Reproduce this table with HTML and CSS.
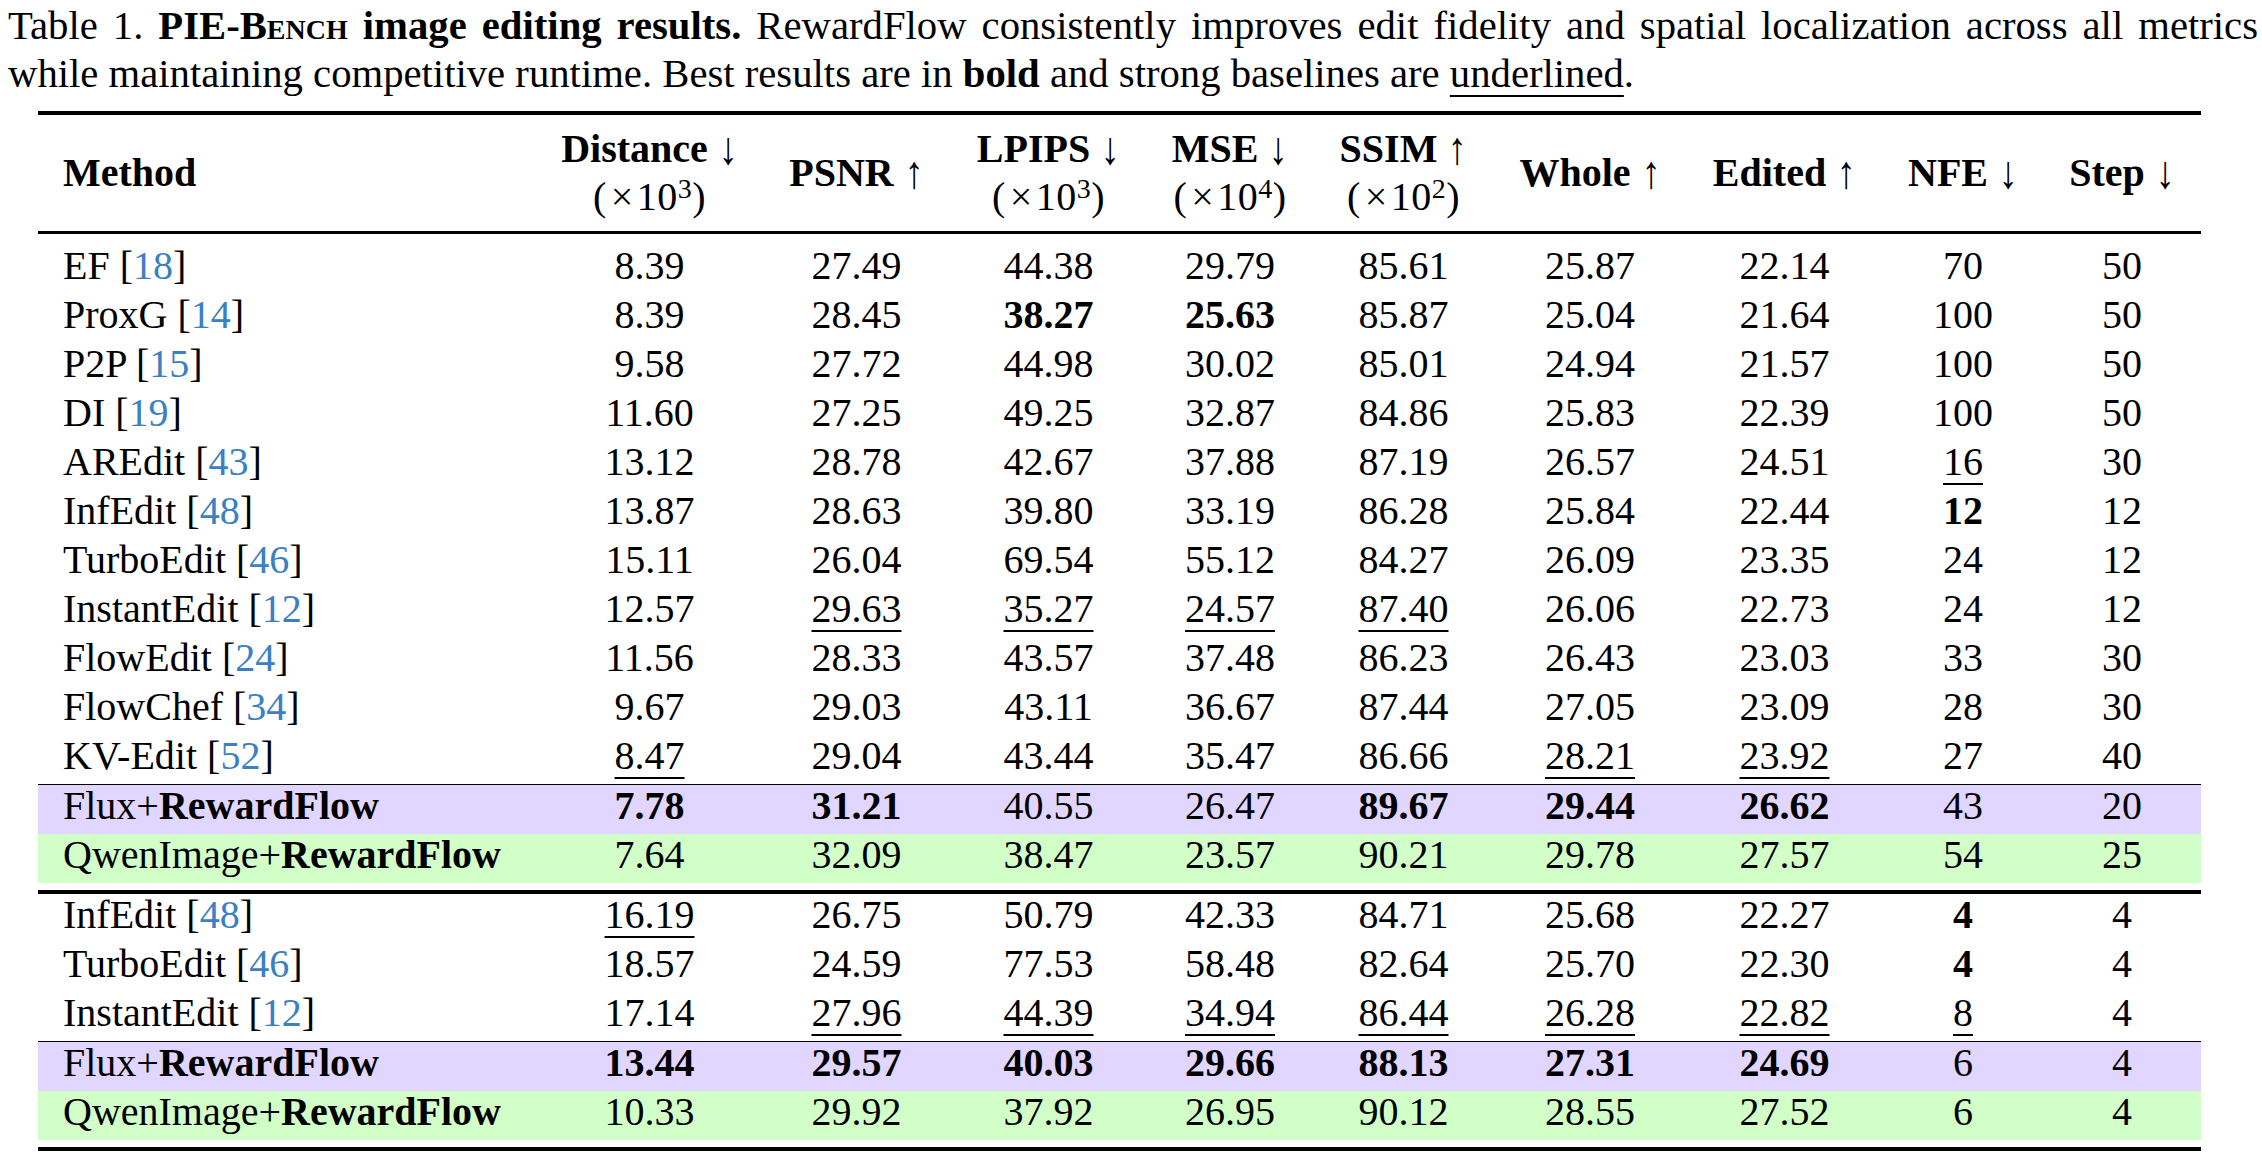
FILE: index.html
```html
<!DOCTYPE html>
<html lang="en">
<head>
<meta charset="utf-8">
<title>Table 1. PIE-Bench image editing results</title>
<link rel="stylesheet" href="styles.css">
</head>
<body>
<div class="page">
  <p class="caption"><span class="line1">Table 1. <b>PIE-<span class="sc">Bench</span> image editing results.</b> RewardFlow consistently improves edit fidelity and spatial localization across all metrics</span>while maintaining competitive runtime. Best results are in <b>bold</b> and strong baselines are <span class="u">underlined</span>.</p>

  <div class="table">
    <div class="rule heavy"></div>
    <div class="row head">
      <div class="cell name"><b>Method</b></div>
      <div class="cell"><b>Distance</b> <span class="ar">↓</span><br><span class="scale">(<span class="times">×</span>10<sup>3</sup>)</span></div>
      <div class="cell"><b>PSNR</b> <span class="ar">↑</span></div>
      <div class="cell"><b>LPIPS</b> <span class="ar">↓</span><br><span class="scale">(<span class="times">×</span>10<sup>3</sup>)</span></div>
      <div class="cell"><b>MSE</b> <span class="ar">↓</span><br><span class="scale">(<span class="times">×</span>10<sup>4</sup>)</span></div>
      <div class="cell"><b>SSIM</b> <span class="ar">↑</span><br><span class="scale">(<span class="times">×</span>10<sup>2</sup>)</span></div>
      <div class="cell"><b>Whole</b> <span class="ar">↑</span></div>
      <div class="cell"><b>Edited</b> <span class="ar">↑</span></div>
      <div class="cell"><b>NFE</b> <span class="ar">↓</span></div>
      <div class="cell"><b>Step</b> <span class="ar">↓</span></div>
    </div>
    <div class="rule head-rule"></div>

    <div class="group first">
      <div class="row"><div class="cell name">EF [<span class="ref">18</span>]</div><div class="cell">8.39</div><div class="cell">27.49</div><div class="cell">44.38</div><div class="cell">29.79</div><div class="cell">85.61</div><div class="cell">25.87</div><div class="cell">22.14</div><div class="cell">70</div><div class="cell">50</div></div>
      <div class="row"><div class="cell name">ProxG [<span class="ref">14</span>]</div><div class="cell">8.39</div><div class="cell">28.45</div><div class="cell"><b>38.27</b></div><div class="cell"><b>25.63</b></div><div class="cell">85.87</div><div class="cell">25.04</div><div class="cell">21.64</div><div class="cell">100</div><div class="cell">50</div></div>
      <div class="row"><div class="cell name">P2P [<span class="ref">15</span>]</div><div class="cell">9.58</div><div class="cell">27.72</div><div class="cell">44.98</div><div class="cell">30.02</div><div class="cell">85.01</div><div class="cell">24.94</div><div class="cell">21.57</div><div class="cell">100</div><div class="cell">50</div></div>
      <div class="row"><div class="cell name">DI [<span class="ref">19</span>]</div><div class="cell">11.60</div><div class="cell">27.25</div><div class="cell">49.25</div><div class="cell">32.87</div><div class="cell">84.86</div><div class="cell">25.83</div><div class="cell">22.39</div><div class="cell">100</div><div class="cell">50</div></div>
      <div class="row"><div class="cell name">AREdit [<span class="ref">43</span>]</div><div class="cell">13.12</div><div class="cell">28.78</div><div class="cell">42.67</div><div class="cell">37.88</div><div class="cell">87.19</div><div class="cell">26.57</div><div class="cell">24.51</div><div class="cell"><span class="u">16</span></div><div class="cell">30</div></div>
      <div class="row"><div class="cell name">InfEdit [<span class="ref">48</span>]</div><div class="cell">13.87</div><div class="cell">28.63</div><div class="cell">39.80</div><div class="cell">33.19</div><div class="cell">86.28</div><div class="cell">25.84</div><div class="cell">22.44</div><div class="cell"><b>12</b></div><div class="cell">12</div></div>
      <div class="row"><div class="cell name">TurboEdit [<span class="ref">46</span>]</div><div class="cell">15.11</div><div class="cell">26.04</div><div class="cell">69.54</div><div class="cell">55.12</div><div class="cell">84.27</div><div class="cell">26.09</div><div class="cell">23.35</div><div class="cell">24</div><div class="cell">12</div></div>
      <div class="row"><div class="cell name">InstantEdit [<span class="ref">12</span>]</div><div class="cell">12.57</div><div class="cell"><span class="u">29.63</span></div><div class="cell"><span class="u">35.27</span></div><div class="cell"><span class="u">24.57</span></div><div class="cell"><span class="u">87.40</span></div><div class="cell">26.06</div><div class="cell">22.73</div><div class="cell">24</div><div class="cell">12</div></div>
      <div class="row"><div class="cell name">FlowEdit [<span class="ref">24</span>]</div><div class="cell">11.56</div><div class="cell">28.33</div><div class="cell">43.57</div><div class="cell">37.48</div><div class="cell">86.23</div><div class="cell">26.43</div><div class="cell">23.03</div><div class="cell">33</div><div class="cell">30</div></div>
      <div class="row"><div class="cell name">FlowChef [<span class="ref">34</span>]</div><div class="cell">9.67</div><div class="cell">29.03</div><div class="cell">43.11</div><div class="cell">36.67</div><div class="cell">87.44</div><div class="cell">27.05</div><div class="cell">23.09</div><div class="cell">28</div><div class="cell">30</div></div>
      <div class="row"><div class="cell name">KV-Edit [<span class="ref">52</span>]</div><div class="cell"><span class="u">8.47</span></div><div class="cell">29.04</div><div class="cell">43.44</div><div class="cell">35.47</div><div class="cell">86.66</div><div class="cell"><span class="u">28.21</span></div><div class="cell"><span class="u">23.92</span></div><div class="cell">27</div><div class="cell">40</div></div>
    </div>
    <div class="rule thin"></div>
    <div class="row flux"><div class="cell name">Flux+<b>RewardFlow</b></div><div class="cell"><b>7.78</b></div><div class="cell"><b>31.21</b></div><div class="cell">40.55</div><div class="cell">26.47</div><div class="cell"><b>89.67</b></div><div class="cell"><b>29.44</b></div><div class="cell"><b>26.62</b></div><div class="cell">43</div><div class="cell">20</div></div>
    <div class="row qwen"><div class="cell name">QwenImage+<b>RewardFlow</b></div><div class="cell">7.64</div><div class="cell">32.09</div><div class="cell">38.47</div><div class="cell">23.57</div><div class="cell">90.21</div><div class="cell">29.78</div><div class="cell">27.57</div><div class="cell">54</div><div class="cell">25</div></div>

    <div class="rule heavy sep"></div>
    <div class="group">
      <div class="row"><div class="cell name">InfEdit [<span class="ref">48</span>]</div><div class="cell"><span class="u">16.19</span></div><div class="cell">26.75</div><div class="cell">50.79</div><div class="cell">42.33</div><div class="cell">84.71</div><div class="cell">25.68</div><div class="cell">22.27</div><div class="cell"><b>4</b></div><div class="cell">4</div></div>
      <div class="row"><div class="cell name">TurboEdit [<span class="ref">46</span>]</div><div class="cell">18.57</div><div class="cell">24.59</div><div class="cell">77.53</div><div class="cell">58.48</div><div class="cell">82.64</div><div class="cell">25.70</div><div class="cell">22.30</div><div class="cell"><b>4</b></div><div class="cell">4</div></div>
      <div class="row"><div class="cell name">InstantEdit [<span class="ref">12</span>]</div><div class="cell">17.14</div><div class="cell"><span class="u">27.96</span></div><div class="cell"><span class="u">44.39</span></div><div class="cell"><span class="u">34.94</span></div><div class="cell"><span class="u">86.44</span></div><div class="cell"><span class="u">26.28</span></div><div class="cell"><span class="u">22.82</span></div><div class="cell"><span class="u">8</span></div><div class="cell">4</div></div>
    </div>
    <div class="rule thin"></div>
    <div class="row flux"><div class="cell name">Flux+<b>RewardFlow</b></div><div class="cell"><b>13.44</b></div><div class="cell"><b>29.57</b></div><div class="cell"><b>40.03</b></div><div class="cell"><b>29.66</b></div><div class="cell"><b>88.13</b></div><div class="cell"><b>27.31</b></div><div class="cell"><b>24.69</b></div><div class="cell">6</div><div class="cell">4</div></div>
    <div class="row qwen"><div class="cell name">QwenImage+<b>RewardFlow</b></div><div class="cell">10.33</div><div class="cell">29.92</div><div class="cell">37.92</div><div class="cell">26.95</div><div class="cell">90.12</div><div class="cell">28.55</div><div class="cell">27.52</div><div class="cell">6</div><div class="cell">4</div></div>
    <div class="rule heavy sep"></div>
  </div>
</div>
</body>
</html>
```

FILE: styles.css
```css
html, body {
  margin: 0;
  padding: 0;
  background: #ffffff;
}

body {
  font-family: "Liberation Serif", "Times New Roman", serif;
  color: #000000;
  font-size: 40px;
}

.page {
  padding: 2px 4px 0 8px;
}

.caption {
  margin: 0;
  font-size: 40.7px;
  line-height: 48px;
}

.caption .line1 {
  display: block;
  text-align: justify;
  text-align-last: justify;
}

.sc {
  font-variant: small-caps;
}

.u {
  text-decoration: underline;
  text-decoration-thickness: 2px;
  text-underline-offset: 8px;
  text-decoration-skip-ink: none;
}

.table {
  width: 2163px;
  margin: 13px 0 0 30px;
}

.rule {
  background: #000000;
}

.rule.heavy {
  height: 4px;
}

.rule.head-rule {
  height: 3px;
}

.rule.thin {
  height: 1px;
}

.rule.sep {
  margin-top: 7px;
}

.row {
  display: grid;
  grid-template-columns: 498px 227px 187px 197px 166px 181px 192px 197px 160px 158px;
  height: 49px;
  line-height: 41px;
  padding-bottom: 8px;
  box-sizing: border-box;
  white-space: nowrap;
}

.cell {
  text-align: center;
}

.cell.name {
  text-align: left;
  padding-left: 25px;
}

.row.head {
  height: 116px;
  padding: 0;
  line-height: 48px;
  align-items: center;
}

.ar {
  display: inline-block;
  font-weight: normal;
  line-height: 0.6;
  transform: scale(0.95, 1.15);
  transform-origin: 50% 50%;
}

.times {
  padding: 0 3px 0 4px;
}

.scale {
  letter-spacing: 0.5px;
}

sup {
  font-size: 0.7em;
  line-height: 0;
  vertical-align: 0.42em;
}

.group.first {
  padding-top: 11px;
}

.ref {
  color: #3a80c3;
}

.flux {
  background: #e0d6ff;
}

.qwen {
  background: #d2ffc8;
}
```
